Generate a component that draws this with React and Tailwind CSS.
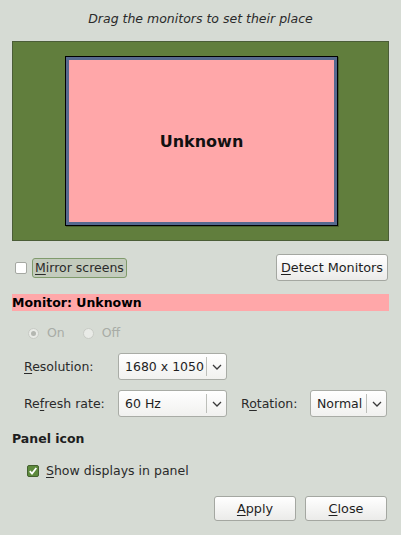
import React from 'react';

const font = "font-['DejaVu_Sans',sans-serif]";

function Combo({value, width, sepAt}) {
    return (
        <div className={`flex items-center h-[27px] ${width} rounded-[3px] border border-[#a9aca6] bg-gradient-to-b from-white to-[#f1f1ef]`}>
            <div className={`${sepAt} pl-[6px] text-[12.5px] leading-[16px] text-[#1e1e1e] whitespace-nowrap`}>{value}</div>
            <div className="w-px h-[19px] bg-[#bdbfba]" />
            <div className="flex-1 flex items-center justify-center">
                <svg width="10" height="6" viewBox="0 0 10 6">
                    <path d="M1 1 L5 5 L9 1" fill="none" stroke="#3a3a3a" strokeWidth="1.3" />
                </svg>
            </div>
        </div>
    );
}

function Button({children, className}) {
    return (
        <div className={`flex items-center justify-center rounded-[3px] border border-[#a4a7a1] bg-gradient-to-b from-white to-[#ebebe9] text-[12.8px] leading-[16px] text-[#1e1e1e] ${className}`}>
            {children}
        </div>
    );
}

export default function App() {
    return (
        <div className={`w-[401px] h-[535px] bg-[#d6dbd4] flex flex-col overflow-hidden ${font}`}>
            {/*title*/}
            <div className="pt-[11px] text-center italic text-[12.5px] leading-[16px] text-[#2a2a2a]">
                Drag the monitors to set their place
            </div>

            {/*monitor area*/}
            <div className="mt-[14px] mx-[12px] h-[200px] border border-[#4b5d37] bg-[#617e3d] pl-[52px] pt-[14px]">
                <div className="w-[273px] h-[170px] border border-black bg-[#56698f] p-[3px] shadow-[1px_1px_0_rgba(0,0,0,0.25)]">
                    <div className="w-full h-full bg-[#ffa7a9] flex items-center justify-center font-bold text-[16px] leading-[18px] text-[#111] pt-[1px]">
                        Unknown
                    </div>
                </div>
            </div>

            {/*mirror row*/}
            <div className="mt-[13px] h-[27px] flex items-center pl-[15px] pr-[13px]">
                <div className="w-[12px] h-[12px] rounded-[2px] border border-[#a5a8a2] bg-white" />
                <div className="ml-[5px] h-[20px] px-[2px] flex items-center rounded-[3px] border border-[#809b6c] bg-[#c3cbbd] text-[12.5px] leading-[16px] text-[#2a2a2a]">
                    <span className="underline underline-offset-2">M</span>irror screens
                </div>
                <div className="flex-1" />
                <Button className="w-[112px] h-[27px]">
                    <span className="underline underline-offset-2">D</span>etect Monitors
                </Button>
            </div>

            {/*monitor name bar*/}
            <div className="mt-[13px] mx-[12px] h-[17px] bg-[#ffa7a9] flex items-center font-bold text-[12.5px] leading-[16px] text-black">
                Monitor: Unknown
            </div>

            {/*on / off*/}
            <div className="mt-[14px] h-[16px] flex items-center pl-[28px] text-[12.5px] leading-[16px] text-[#a8aca6]">
                <div className="w-[11px] h-[11px] rounded-full border border-[#c8cbc5] bg-[#e9ebe7] flex items-center justify-center">
                    <div className="w-[5px] h-[5px] rounded-full bg-[#b4b7b1]" />
                </div>
                <span className="ml-[8px]">On</span>
                <div className="ml-[18px] w-[11px] h-[11px] rounded-full border border-[#c8cbc5] bg-[#e9ebe7]" />
                <span className="ml-[8px]">Off</span>
            </div>

            {/*resolution*/}
            <div className="mt-[12px] h-[27px] flex items-center pl-[24px] text-[12.5px] leading-[16px] text-[#2a2a2a]">
                <div className="w-[94px]"><span className="underline underline-offset-2">R</span>esolution:</div>
                <Combo value="1680 x 1050" width="w-[109px]" sepAt="w-[87px]" />
            </div>

            {/*refresh + rotation*/}
            <div className="mt-[10px] h-[27px] flex items-center pl-[24px] text-[12.5px] leading-[16px] text-[#2a2a2a]">
                <div className="w-[94px]">Re<span className="underline underline-offset-2">f</span>resh rate:</div>
                <Combo value="60 Hz" width="w-[109px]" sepAt="w-[87px]" />
                <div className="ml-[14px] w-[69px]">R<span className="underline underline-offset-2">o</span>tation:</div>
                <Combo value="Normal" width="w-[77px]" sepAt="w-[55px]" />
            </div>

            {/*panel icon*/}
            <div className="mt-[14px] pl-[12px] font-bold text-[12.5px] leading-[16px] text-[#1e1e1e]">Panel icon</div>
            <div className="mt-[16px] h-[16px] flex items-center pl-[27px] text-[12.5px] leading-[16px] text-[#2a2a2a]">
                <svg width="12" height="12" viewBox="0 0 12 12">
                    <rect x="0.5" y="0.5" width="11" height="11" rx="1.5" fill="#5d8a3c" stroke="#44602f" />
                    <path d="M2.8 6.2 L5 8.6 L9.3 3" fill="none" stroke="white" strokeWidth="1.8" />
                </svg>
                <span className="ml-[7px]"><span className="underline underline-offset-2">S</span>how displays in panel</span>
            </div>

            {/*buttons*/}
            <div className="mt-[17px] flex justify-end gap-[9px] pr-[14px]">
                <Button className="w-[82px] h-[25px]">
                    <span className="underline underline-offset-2">A</span>pply
                </Button>
                <Button className="w-[82px] h-[25px]">
                    <span className="underline underline-offset-2">C</span>lose
                </Button>
            </div>
        </div>
    );
}
